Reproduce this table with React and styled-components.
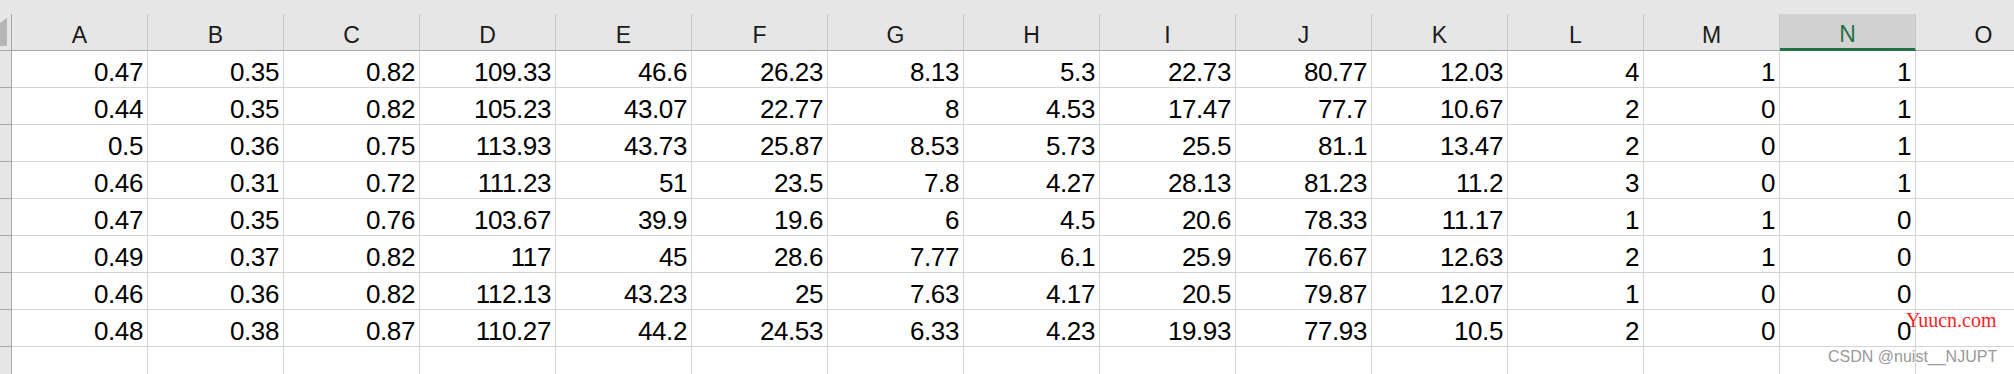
import React from "react";
import styled, { createGlobalStyle, css } from "styled-components";

const Global = createGlobalStyle`
  html, body { margin: 0; padding: 0; background: #ffffff; overflow: hidden; }
  body { font-family: "Liberation Sans", Arial, sans-serif; }
`;

const COLS = ["A","B","C","D","E","F","G","H","I","J","K","L","M","N","O"];
const ACTIVE = "N";

const DATA = [
  ["0.47","0.35","0.82","109.33","46.6","26.23","8.13","5.3","22.73","80.77","12.03","4","1","1"],
  ["0.44","0.35","0.82","105.23","43.07","22.77","8","4.53","17.47","77.7","10.67","2","0","1"],
  ["0.5","0.36","0.75","113.93","43.73","25.87","8.53","5.73","25.5","81.1","13.47","2","0","1"],
  ["0.46","0.31","0.72","111.23","51","23.5","7.8","4.27","28.13","81.23","11.2","3","0","1"],
  ["0.47","0.35","0.76","103.67","39.9","19.6","6","4.5","20.6","78.33","11.17","1","1","0"],
  ["0.49","0.37","0.82","117","45","28.6","7.77","6.1","25.9","76.67","12.63","2","1","0"],
  ["0.46","0.36","0.82","112.13","43.23","25","7.63","4.17","20.5","79.87","12.07","1","0","0"],
  ["0.48","0.38","0.87","110.27","44.2","24.53","6.33","4.23","19.93","77.93","10.5","2","0","0"],
  ["","","","","","","","","","","","","",""],
];

const Sheet = styled.div`
  position: relative;
  width: 2014px;
  height: 374px;
  overflow: hidden;
  display: flex;
  flex-direction: column;
`;

const TopStrip = styled.div`
  height: 14px;
  flex: none;
  background: #e6e6e6;
`;

const Row = styled.div`
  display: grid;
  grid-template-columns: 12px repeat(15, 136px);
  height: 37px;
  flex: none;
`;

const Corner = styled.div`
  position: relative;
  background: #e6e6e6;
  border-right: 1px solid #a6a6a6;
  border-bottom: 1px solid #a6a6a6;
`;

const CornerMark = styled.svg`
  position: absolute;
  left: 0;
  top: 4px;
`;

const ColHead = styled.div`
  background: ${(p) => (p.$active ? "#d2d2d2" : "#e6e6e6")};
  color: ${(p) => (p.$active ? "#217346" : "#1a1a1a")};
  border-right: 1px solid #c8c8c8;
  border-bottom: ${(p) => (p.$active ? "3px solid #217346" : "1px solid #a6a6a6")};
  font-size: 23px;
  text-align: center;
  padding-top: 6px;
  line-height: 30px;
  box-sizing: border-box;
  height: 37px;
  ${(p) => p.$active && css`line-height: 28px;`}
`;

const RowHead = styled.div`
  background: #e6e6e6;
  border-right: 1px solid #a6a6a6;
  border-bottom: 1px solid #a6a6a6;
`;

const Cell = styled.div`
  border-right: 1px solid #d4d4d4;
  border-bottom: 1px solid #d4d4d4;
  font-size: 26px;
  letter-spacing: -0.4px;
  color: #000;
  text-align: right;
  padding: 7px 4px 0 0;
  line-height: 29px;
  box-sizing: border-box;
  height: 37px;
  white-space: nowrap;
  overflow: hidden;
`;

const SiteMark = styled.div`
  position: absolute;
  left: 1906px;
  top: 310px;
  font-family: "Liberation Serif", "Times New Roman", serif;
  font-size: 20px;
  line-height: 20px;
  color: #ff1f1f;
`;

const AuthorMark = styled.div`
  position: absolute;
  left: 1828px;
  top: 349px;
  font-family: "Liberation Sans", Arial, sans-serif;
  font-size: 16px;
  line-height: 16px;
  color: #999999;
`;

export default function App() {
  return (
    <>
      <Global />
      <Sheet>
        <TopStrip />
        <Row>
          <Corner>
            <CornerMark width="8" height="29" viewBox="0 0 8 29">
              <polygon points="7,0 7,28 0,28 0,5" fill="#b6b6b6" />
            </CornerMark>
          </Corner>
          {COLS.map((c) => (
            <ColHead key={c} $active={c === ACTIVE}>{c}</ColHead>
          ))}
        </Row>
        {DATA.map((r, i) => (
          <Row key={i}>
            <RowHead />
            {COLS.map((c, j) => (
              <Cell key={c}>{r[j] || ""}</Cell>
            ))}
          </Row>
        ))}
        <SiteMark>Yuucn.com</SiteMark>
        <AuthorMark>CSDN @nuist__NJUPT</AuthorMark>
      </Sheet>
    </>
  );
}
